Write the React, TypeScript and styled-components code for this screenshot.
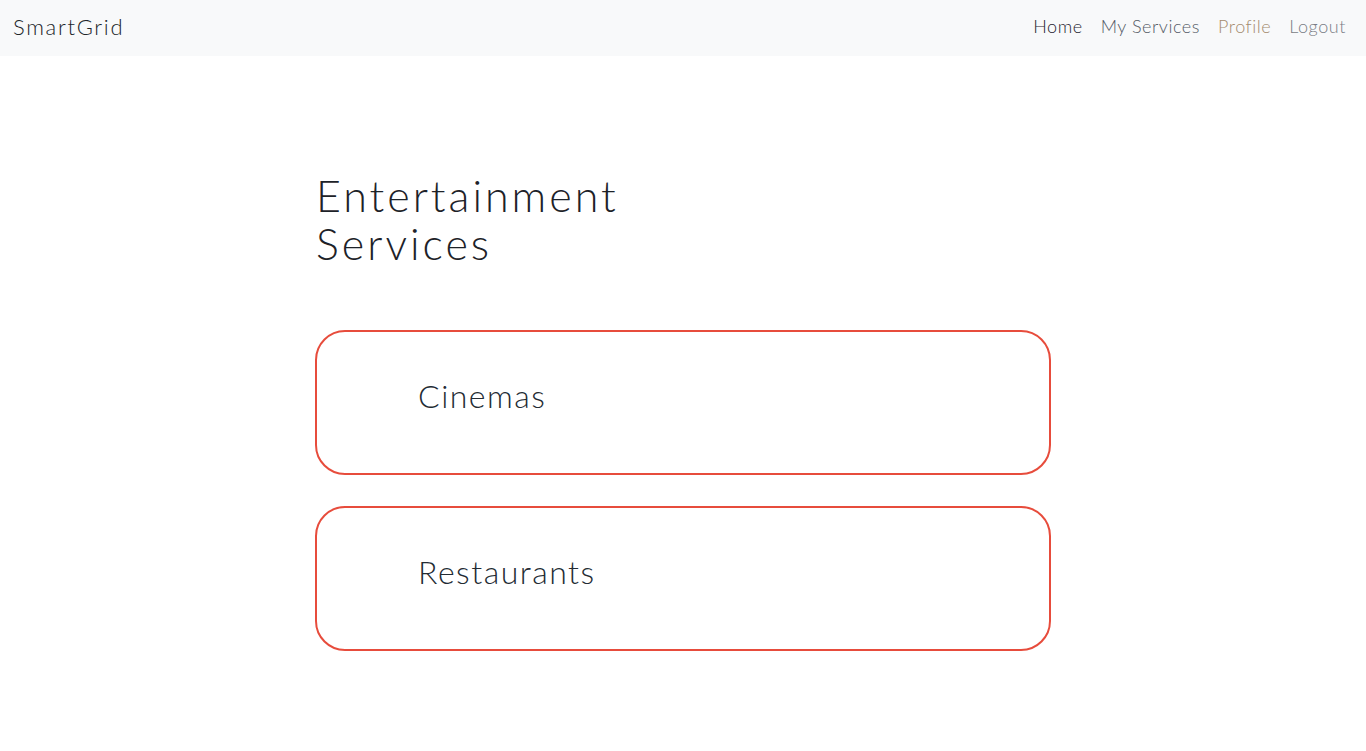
import styled, { createGlobalStyle } from "styled-components";

const GlobalStyle = createGlobalStyle`
  body {
    margin: 0;
    background: #fff;
    font-family: Lato, "Open Sans", sans-serif;
    color: #212529;
  }
`;

const NavBar = styled.nav`
  display: flex;
  align-items: center;
  justify-content: space-between;
  box-sizing: border-box;
  height: 56px;
  padding: 0 20px 4px 13px;
  background: #f8f9fa;
`;

const Brand = styled.a`
  font-size: 22px;
  font-weight: 300;
  letter-spacing: 1.7px;
  color: #212529;
  text-decoration: none;
`;

const NavLinks = styled.div`
  display: flex;
  gap: 18px;
`;

const NavLink = styled.a<{ $color: string }>`
  font-size: 18px;
  font-weight: 300;
  letter-spacing: 0.55px;
  color: ${(p) => p.$color};
  text-decoration: none;
`;

const Main = styled.main`
  width: 736px;
  margin: 0 auto;
  padding-top: 116px;
`;

const Title = styled.h1`
  margin: 0 0 62px 1px;
  width: 340px;
  font-size: 43px;
  line-height: 48px;
  font-weight: 300;
  letter-spacing: 3px;
  color: #1d2228;
`;

const CardList = styled.div`
  display: flex;
  flex-direction: column;
  gap: 31px;
`;

const ServiceCard = styled.a`
  display: flex;
  align-items: flex-start;
  box-sizing: border-box;
  height: 145px;
  padding: 44px 101px 0;
  border: 2px solid #e74c3c;
  border-radius: 30px;
  text-decoration: none;
`;

const CardLabel = styled.span`
  font-size: 32px;
  font-weight: 300;
  letter-spacing: 1.5px;
  color: #232b33;
`;

const links = [
  { label: "Home", color: "#1f2430" },
  { label: "My Services", color: "#555b66" },
  { label: "Profile", color: "#a48b6e" },
  { label: "Logout", color: "#7a7d85" },
];

export default function App() {
  return (
    <>
      <GlobalStyle />
      <NavBar>
        <Brand href="#">SmartGrid</Brand>
        <NavLinks>
          {links.map((l) => (
            <NavLink key={l.label} href="#" $color={l.color}>
              {l.label}
            </NavLink>
          ))}
        </NavLinks>
      </NavBar>
      <Main>
        <Title>Entertainment Services</Title>
        <CardList>
          <ServiceCard href="#">
            <CardLabel>Cinemas</CardLabel>
          </ServiceCard>
          <ServiceCard href="#">
            <CardLabel>Restaurants</CardLabel>
          </ServiceCard>
        </CardList>
      </Main>
    </>
  );
}
